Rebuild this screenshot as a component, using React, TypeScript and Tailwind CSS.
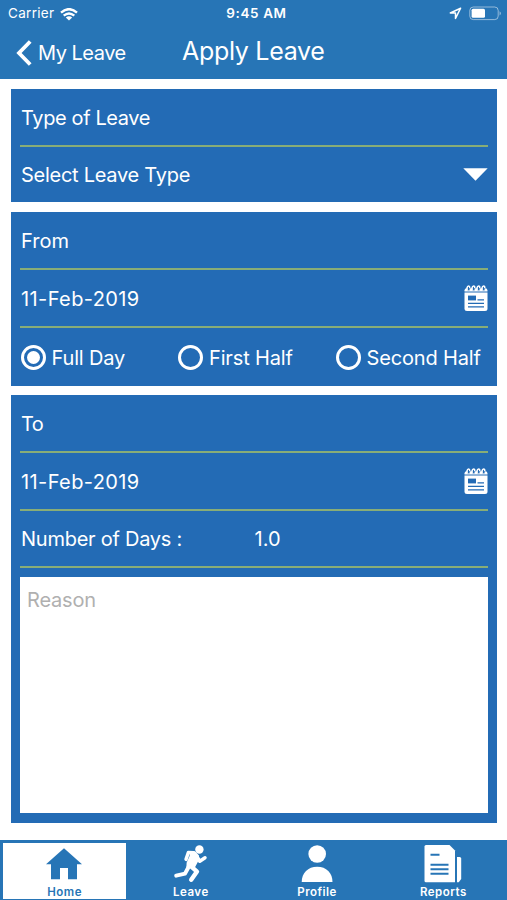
import { useState } from 'react';
import type { ReactNode } from 'react';
import clsx from 'clsx';

const HomeIcon = () => (
  <svg width="36" height="32" viewBox="0 0 36 32" fill="currentColor">
    <path d="M18 .3 36 16.2H31V31.3H22V20H14V31.3H5V16.2H0Z" />
  </svg>
);

const RunnerIcon = () => (
  <svg width="36" height="38" viewBox="0 0 36 38" fill="none" stroke="currentColor" strokeLinecap="round" strokeLinejoin="round">
    <circle cx="27.4" cy="4.5" r="4.2" fill="currentColor" stroke="none" />
    <path d="M14 14.4 16.4 7.4 21.5 7.6" strokeWidth="3.4" />
    <path d="M24.5 11 27.8 16.2 33 12.8" strokeWidth="3.5" />
    <path d="M19 7 22.6 7.2 26 11 26 14.5 22 22 15.4 21.8 15.6 18 18.6 11.2Z" fill="currentColor" strokeWidth="2" />
    <path d="M16.6 22 13 28.6 4.2 30.6" strokeWidth="4" />
    <path d="M19 21.4 25 26.6 19.2 34.8" strokeWidth="4.4" />
  </svg>
);

const ProfileIcon = () => (
  <svg width="32" height="38" viewBox="0 0 32 38" fill="currentColor">
    <circle cx="16.2" cy="9" r="8.8" />
    <path d="M.7 37C.7 28 7 21.8 16.2 21.8S31.5 28 31.5 37Z" />
  </svg>
);

const ReportsIcon = () => (
  <svg width="38" height="38" viewBox="0 0 38 38" fill="currentColor">
    <path d="M2 0H25.5L31 5.5V37.3H2Q.5 37.3.5 35.8V1.5Q.5 0 2 0Z" />
    <path d="M33 12H35.7Q37.2 12 37.2 13.5V34L34.7 37.3H33Z" />
    <g className="text-[#2775b6]" stroke="currentColor" strokeWidth="1.9">
      <path d="M6.5 9.8H15.5M6.5 19.8H24.5M6.5 24.2H24.5M6.5 28.8H24.5" />
    </g>
  </svg>
);

const CalendarIcon = () => (
  <svg width="24" height="27" viewBox="0 0 24 27" fill="none">
    <path d="M.5 7.6H23.5V23.5Q23.5 26 21 26H3Q.5 26 .5 23.5Z" fill="white" />
    <path d="M.5 6.6V5.4Q.5 3.2 2.7 3.2H21.3Q23.5 3.2 23.5 5.4V6.6Z" fill="white" />
    {[4.6, 9.6, 14.6, 19.6].map((x) => (
      <g key={x}>
        <path d={`M${x - 1.2} 0V5.4H${x + 1}V0Z`} fill="#236bb5" />
        <path d={`M${x - 1.6} 5.4V3Q${x - 1.2} 1 ${x} 1T${x + 1.2} 3`} stroke="white" strokeWidth="1.5" />
      </g>
    ))}
    <path d="M4 10.6H12V15.4H4Z" fill="#236bb5" />
    <path d="M13.5 14.8H20M4 18.4H20M4 21.8H20" stroke="#236bb5" strokeWidth="1.3" />
  </svg>
);

const Card = ({ children, className }: { children: ReactNode; className?: string }) => (
  <section className={clsx('bg-[#236bb5] px-[9px]', className)}>{children}</section>
);

const Row = ({ children, className }: { children: ReactNode; className?: string }) => (
  <div className={clsx('flex items-center justify-between pl-px', className)}>{children}</div>
);

const Divider = () => <div className="h-[2px] bg-[#88ad77]" />;

const durations = [
  { label: 'Full Day', className: 'w-[157.5px]' },
  { label: 'First Half', className: 'w-[157.5px]' },
  { label: 'Second Half', className: '' },
];

const tabs = [
  { label: 'Home', icon: <HomeIcon /> },
  { label: 'Leave', icon: <RunnerIcon /> },
  { label: 'Profile', icon: <ProfileIcon /> },
  { label: 'Reports', icon: <ReportsIcon /> },
];

const StatusBar = () => (
  <div className="grid h-[28px] grid-cols-3 items-center pl-[8px] pr-[5px] text-[13.5px]">
    <div className="flex items-center gap-[6px]">
      <span className="tracking-[0.3px]">Carrier</span>
      <svg width="18" height="13" viewBox="0 0 18 13" fill="none" stroke="white" strokeWidth="2.4">
        <path d="M1 4.6Q9-2.3 17 4.6M3.7 7.7Q9 3.2 14.3 7.7" />
        <path d="M9 12.5 5.8 9.4Q9 6.9 12.2 9.4Z" fill="white" stroke="none" />
      </svg>
    </div>
    <span className="pl-[3px] text-center text-[13.5px] font-semibold tracking-[0.6px]">9:45 AM</span>
    <div className="flex items-center justify-end gap-[7px] pb-px">
      <svg width="13" height="13" viewBox="0 0 13 13" fill="none" stroke="white" strokeWidth="1.5" strokeLinejoin="round">
        <path d="M11.6 1.2 1.3 6H6.5V11.5Z" />
      </svg>
      <svg width="33" height="15" viewBox="0 0 33 15" fill="none">
        <rect x=".8" y="1" width="28.4" height="12.6" rx="3.5" stroke="white" strokeOpacity=".5" />
        <rect x="2.6" y="2.8" width="13.4" height="9" rx="1.5" fill="white" />
        <path d="M30.6 5.2Q33 7.3 30.6 9.4Z" fill="white" fillOpacity=".6" />
      </svg>
    </div>
  </div>
);

const App = () => {
  const [duration, setDuration] = useState('Full Day');
  const [tab, setTab] = useState('Home');
  const [reason, setReason] = useState('');

  return (
    <div className="flex h-[900px] w-[507px] flex-col bg-white font-['Inter',sans-serif] text-[20px] leading-none text-white">
      <header className="h-[79px] bg-[#2775b6]">
        <StatusBar />
        <div className="grid h-[50px] grid-cols-[182px_1fr] items-center">
          <button className="flex items-center gap-[6px] pl-[16px]">
            <svg width="16" height="26" viewBox="0 0 16 26" fill="none" stroke="white" strokeWidth="3.8">
              <path d="M14.2 1.5 3 13 14.2 24.5" />
            </svg>
            <span className="tracking-[-0.5px]">My Leave</span>
          </button>
          <h1 className="pb-[4px] text-[25px] tracking-[-0.3px]">Apply Leave</h1>
        </div>
      </header>

      <main className="flex flex-1 flex-col px-[10px] pl-[11px] pt-[10px]">
        {/* Leave type */}
        <Card className="h-[113px]">
          <Row className="h-[56px] pt-px tracking-[-0.38px]">Type of Leave</Row>
          <Divider />
          <Row className="h-[55px]">
            <span className="tracking-[-0.27px]">Select Leave Type</span>
            <svg width="25" height="13" viewBox="0 0 25 13" fill="white">
              <path d="M.3.3H24.7L12.5 12.8Z" />
            </svg>
          </Row>
        </Card>

        {/* From */}
        <Card className="mt-[10px] h-[174px]">
          <Row className="h-[56px] pt-px">From</Row>
          <Divider />
          <Row className="h-[56px] pt-px">
            <span className="tracking-[0.4px]">11-Feb-2019</span>
            <CalendarIcon />
          </Row>
          <Divider />
          <div className="flex h-[58px] items-center pl-[0.5px] pt-px">
            {durations.map((d) => (
              <button
                key={d.label}
                onClick={() => setDuration(d.label)}
                className={clsx('flex shrink-0 items-center gap-[6px]', d.className)}
              >
                <span className="flex size-[25px] items-center justify-center rounded-full border-3 border-white">
                  {duration === d.label && <span className="size-[13px] rounded-full bg-white" />}
                </span>
                <span className="tracking-[-0.15px]">{d.label}</span>
              </button>
            ))}
          </div>
        </Card>

        {/* To */}
        <Card className="mt-[9px] h-[428px]">
          <Row className="h-[56px] pt-px tracking-[-0.5px]">To</Row>
          <Divider />
          <Row className="h-[56px] pt-px">
            <span className="tracking-[0.4px]">11-Feb-2019</span>
            <CalendarIcon />
          </Row>
          <Divider />
          <div className="grid h-[55px] grid-cols-2 items-center pl-px pt-px">
            <span className="tracking-[-0.25px]">Number of Days :</span>
            <span>1.0</span>
          </div>
          <Divider />
          <textarea
            value={reason}
            onChange={(e) => setReason(e.target.value)}
            placeholder="Reason"
            className="mt-[9px] block h-[236px] w-full resize-none bg-white px-[7px] py-[13px] leading-[20px] tracking-[-0.2px] text-black outline-none placeholder:text-[#b0b0b0]"
          />
        </Card>
      </main>

      <nav className="grid h-[60px] grid-cols-4 bg-[#2775b6] pb-[2px] pl-[2px] pt-[3px]">
        {tabs.map((t) => (
          <button
            key={t.label}
            onClick={() => setTab(t.label)}
            className={clsx(
              'ml-px mr-[2px] flex flex-col items-center text-[11.5px] font-semibold tracking-[0.5px]',
              tab === t.label && 'bg-white text-[#2775b6]'
            )}
          >
            <span className="flex h-[41px] items-center pr-px">{t.icon}</span>
            <span className="pt-[3px]">{t.label}</span>
          </button>
        ))}
      </nav>
    </div>
  );
};

export default App;
